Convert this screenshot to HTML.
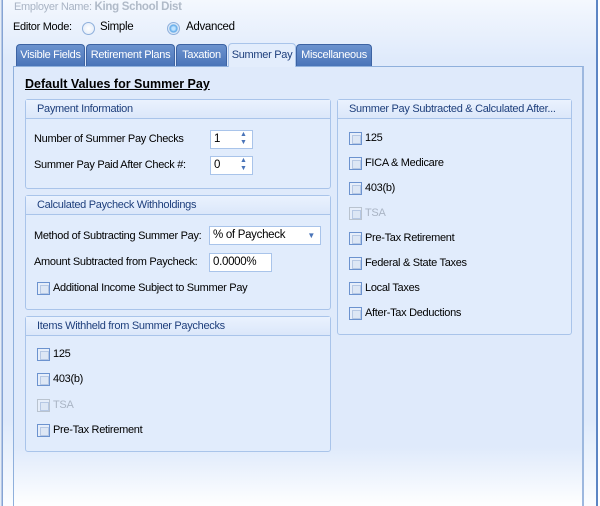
<!DOCTYPE html>
<html><head><style>
*{margin:0;padding:0;box-sizing:border-box}
body{width:600px;height:506px;overflow:hidden;font-family:"Liberation Sans",sans-serif;font-size:11px;letter-spacing:-0.3px;position:relative;
background:linear-gradient(#f4f8fe 0px,#dfeafb 60px,#dfeafb 420px,#fbfdff 506px)}
.a{position:absolute;white-space:nowrap}
.tab{position:absolute;top:44px;height:22px;background:linear-gradient(#6c93cf,#4a74b8);border:1px solid #3d63a3;border-bottom:none;border-radius:4px 4px 0 0;color:#fff;font-size:11px;line-height:21px;text-align:center;white-space:nowrap;overflow:hidden}
.grp{position:absolute;border:1px solid #a9c4ea;border-radius:3px;background:#e1ecfc}
.gh{height:19px;border-bottom:1px solid #a9c4ea;background:linear-gradient(#eaf2fe,#dbe7fa);color:#1e3f7c;font-size:11px;line-height:18px;padding-left:11px;white-space:nowrap;overflow:hidden}
.cb{position:absolute;width:13px;height:13px;border:1px solid #6c93cf;background:#e6eefa}
.cb::after{content:"";position:absolute;left:2px;top:2px;width:7px;height:7px;border:1px solid #b6c8e4;background:#dde7f5}
.dis{border-color:#b9c3cf}
.lbl{position:absolute;font-size:11px;color:#000;white-space:nowrap}
.inp{position:absolute;background:#fff;border:1px solid #a9c4ea;font-size:11.5px;line-height:17px;padding-left:3px;white-space:nowrap}
</style></head><body>
<div class="a" style="left:0;top:0;width:3px;height:506px;background:linear-gradient(90deg,#fff,#6d92cb)"></div>
<div class="a" style="left:596px;top:0;width:2px;height:506px;background:#5c85c4"></div>
<div class="a" style="left:598px;top:0;width:2px;height:506px;background:#fff"></div>
<div class="a" style="left:14px;top:1px;color:#a9b4c4;font-size:11px">Employer Name: <b style="color:#b0bac8;font-size:11.5px">King School Dist</b></div>
<div class="a" style="left:13px;top:21px;font-size:11px">Editor Mode:</div>
<div class="a" style="left:82px;top:22px;width:13px;height:13px;border-radius:50%;border:1px solid #8fb0dc;background:radial-gradient(#fff,#dde8f7)"></div>
<div class="a" style="left:100px;top:21px;font-size:11.5px">Simple</div>
<div class="a" style="left:167px;top:22px;width:13px;height:13px;border-radius:50%;border:1px solid #8fb0dc;background:radial-gradient(#bfe3ff 20%,#5fa9e8 45%,#dbe8f8 60%)"></div>
<div class="a" style="left:186px;top:21px;font-size:11.5px">Advanced</div>
<div class="tab" style="left:16px;width:69px">Visible Fields</div>
<div class="tab" style="left:86px;width:89px">Retirement Plans</div>
<div class="tab" style="left:176px;width:51px">Taxation</div>
<div class="tab" style="left:296px;width:76px">Miscellaneous</div>
<div class="a" style="left:13px;top:66px;width:571px;height:440px;border:1px solid #8fb0dc;border-bottom:none;border-right:2px solid #9db8df;background:linear-gradient(#dfeafb 0,#dfeafb 380px,#ffffff 440px)"></div>
<div class="a" style="left:228px;top:43px;width:68px;height:24px;background:#e3edfc;border:1px solid #a9c4ea;border-bottom:none;border-radius:4px 4px 0 0;color:#1e3f7c;font-size:11px;line-height:22px;text-align:center">Summer Pay</div>
<div class="a" style="left:25px;top:77px;font-weight:bold;font-size:12.5px;letter-spacing:0;text-decoration:underline">Default Values for Summer Pay</div>

<div class="grp" style="left:25px;top:99px;width:306px;height:90px"><div class="gh">Payment Information</div></div>
<div class="lbl" style="left:34px;top:133px">Number of Summer Pay Checks</div>
<div class="inp" style="left:210px;top:130px;width:43px;height:19px">1</div>
<div class="lbl" style="left:34px;top:159px">Summer Pay Paid After Check #:</div>
<div class="inp" style="left:210px;top:156px;width:43px;height:19px">0</div>
<div class="a" style="left:240px;top:131px;color:#4a74b8;font-size:7px;line-height:8px">▲<br>▼</div>
<div class="a" style="left:240px;top:157px;color:#4a74b8;font-size:7px;line-height:8px">▲<br>▼</div>

<div class="grp" style="left:25px;top:195px;width:306px;height:115px"><div class="gh">Calculated Paycheck Withholdings</div></div>
<div class="lbl" style="left:34px;top:230px">Method of Subtracting Summer Pay:</div>
<div class="inp" style="left:209px;top:226px;width:112px;height:19px">% of Paycheck<span style="position:absolute;right:5px;top:0;color:#4a74b8;font-size:8px">▼</span></div>
<div class="lbl" style="left:34px;top:256px">Amount Subtracted from Paycheck:</div>
<div class="inp" style="left:209px;top:253px;width:63px;height:19px">0.0000%</div>
<div class="cb" style="left:37px;top:282px"></div><div class="lbl" style="left:53px;top:282px">Additional Income Subject to Summer Pay</div>

<div class="grp" style="left:25px;top:316px;width:306px;height:136px"><div class="gh">Items Withheld from Summer Paychecks</div></div>
<div class="cb" style="left:37px;top:348px"></div><div class="lbl" style="left:53px;top:348px">125</div>
<div class="cb" style="left:37px;top:373px"></div><div class="lbl" style="left:53px;top:373px">403(b)</div>
<div class="cb dis" style="left:37px;top:399px"></div><div class="lbl" style="left:53px;top:399px;color:#a9b4c4">TSA</div>
<div class="cb" style="left:37px;top:424px"></div><div class="lbl" style="left:53px;top:424px">Pre-Tax Retirement</div>

<div class="grp" style="left:337px;top:99px;width:235px;height:236px"><div class="gh">Summer Pay Subtracted &amp; Calculated After...</div></div>
<div class="cb" style="left:349px;top:132px"></div><div class="lbl" style="left:365px;top:132px">125</div>
<div class="cb" style="left:349px;top:157px"></div><div class="lbl" style="left:365px;top:157px">FICA &amp; Medicare</div>
<div class="cb" style="left:349px;top:182px"></div><div class="lbl" style="left:365px;top:182px">403(b)</div>
<div class="cb dis" style="left:349px;top:207px"></div><div class="lbl" style="left:365px;top:207px;color:#a9b4c4">TSA</div>
<div class="cb" style="left:349px;top:232px"></div><div class="lbl" style="left:365px;top:232px">Pre-Tax Retirement</div>
<div class="cb" style="left:349px;top:257px"></div><div class="lbl" style="left:365px;top:257px">Federal &amp; State Taxes</div>
<div class="cb" style="left:349px;top:282px"></div><div class="lbl" style="left:365px;top:282px">Local Taxes</div>
<div class="cb" style="left:349px;top:307px"></div><div class="lbl" style="left:365px;top:307px">After-Tax Deductions</div>
</body></html>
